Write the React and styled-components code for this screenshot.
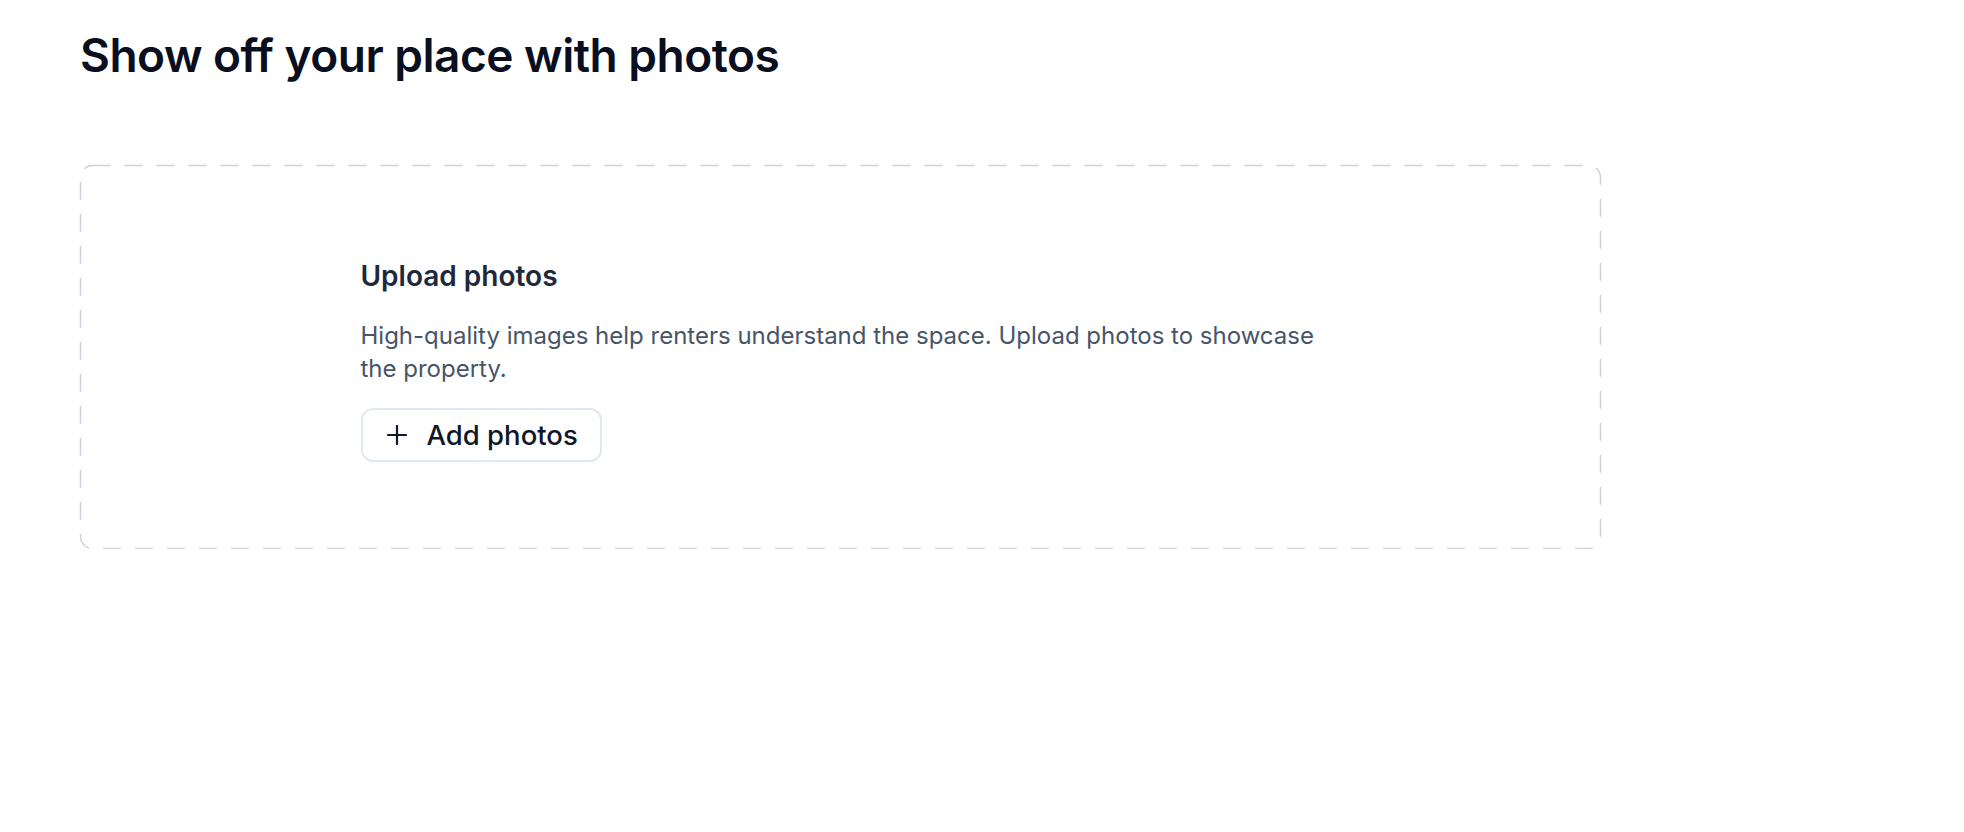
import styled, { createGlobalStyle } from 'styled-components';

const GlobalStyle = createGlobalStyle`
  * {
    box-sizing: border-box;
  }

  body {
    margin: 0;
    background: #ffffff;
    font-family: Inter, "Noto Sans", sans-serif;
    -webkit-font-smoothing: antialiased;
  }
`;

const Page = styled.main`
  padding: 22px 80px 0;
`;

const PageTitle = styled.h1`
  margin: 0;
  font-size: 46px;
  line-height: 66px;
  font-weight: 600;
  letter-spacing: -0.5px;
  color: #0a0f1f;
`;

const DropZone = styled.section`
  position: relative;
  width: 1521px;
  height: 384px;
  margin-top: 77px;
  display: flex;
  align-items: center;
  justify-content: center;
`;

const DashedOutline = styled.svg`
  position: absolute;
  inset: 0;
  width: 100%;
  height: 100%;
  pointer-events: none;
  overflow: visible;
`;

const Content = styled.div`
  width: 960px;
  padding-top: 5px;
  display: flex;
  flex-direction: column;
  align-items: flex-start;
`;

const Heading = styled.h2`
  margin: 0;
  font-size: 28px;
  line-height: 36px;
  font-weight: 600;
  color: #1e293b;
`;

const Description = styled.p`
  margin: 25px 0 0;
  font-size: 24px;
  line-height: 33px;
  color: #475569;
`;

const AddButton = styled.button`
  margin-top: 23px;
  display: inline-flex;
  align-items: center;
  gap: 20px;
  height: 54px;
  padding: 0 22px 0 24px;
  border: 2px solid #e2e8f0;
  border-radius: 12px;
  background: #ffffff;
  font-family: inherit;
  font-size: 27.5px;
  font-weight: 500;
  color: #0f172a;
  cursor: pointer;
`;

function PlusIcon() {
  return (
    <svg width="20" height="20" viewBox="0 0 20 20" fill="none">
      <path d="M10 1v18M1 10h18" stroke="#0f172a" strokeWidth="2.2" strokeLinecap="round" />
    </svg>
  );
}

export default function App() {
  return (
    <>
      <GlobalStyle />
      <Page>
        <PageTitle>Show off your place with photos</PageTitle>
        <DropZone>
          <DashedOutline>
            <rect
              x="0.5"
              y="0.5"
              width="calc(100% - 1px)"
              height="calc(100% - 1px)"
              rx="12"
              fill="none"
              stroke="#cbd5e1"
              strokeWidth="1.5"
              strokeDasharray="18 14"
            />
          </DashedOutline>
          <Content>
            <Heading>Upload photos</Heading>
            <Description>
              High-quality images help renters understand the space. Upload photos to showcase the property.
            </Description>
            <AddButton type="button">
              <PlusIcon />
              Add photos
            </AddButton>
          </Content>
        </DropZone>
      </Page>
    </>
  );
}
